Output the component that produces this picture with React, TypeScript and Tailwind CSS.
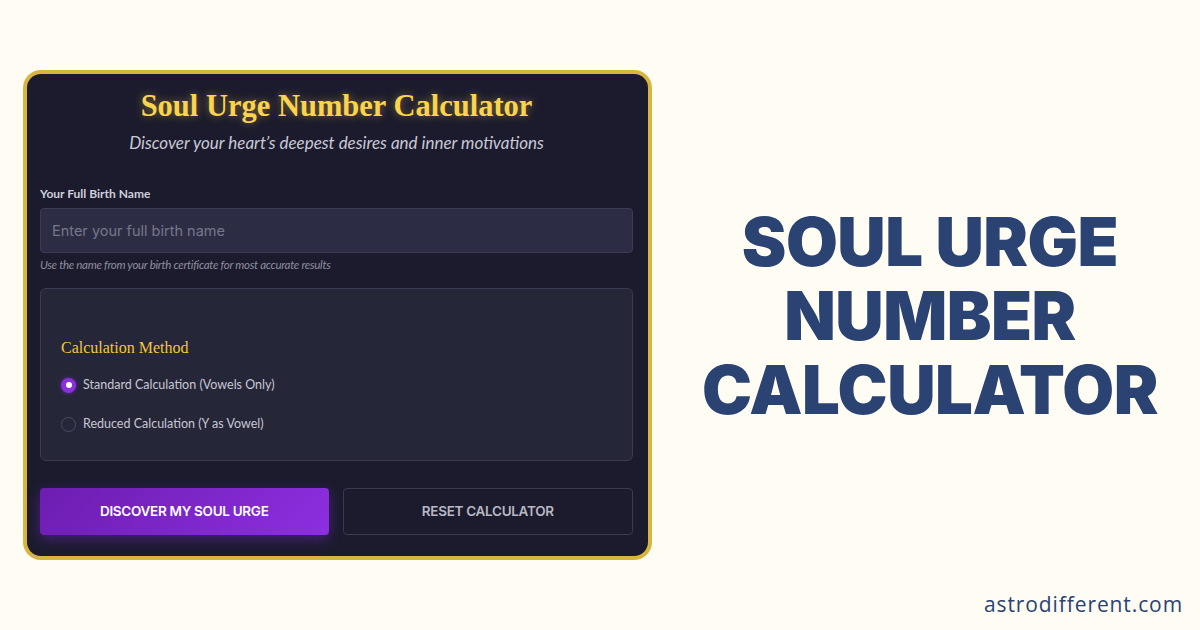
import React from "react";

export default function App() {
  return (
    <div className="w-[1200px] h-[630px] bg-[#fffcf4] relative flex overflow-hidden">
      <div className="pl-[23px] pt-[70px]">
        <div className="w-[629px] h-[490px] rounded-[18px] bg-[#d8b53e] p-[4px]">
          <div className="w-full h-full rounded-[14px] bg-[#1b1b2d] pl-[13px] pr-[15px] pt-[14px] flex flex-col">
            <h1
              className="text-center text-[30.5px] leading-[36px] font-bold text-[#fcd34d] [text-shadow:0_0_8px_rgba(252,211,77,0.45)]"
              style={{ fontFamily: '"Liberation Serif", "Times New Roman", serif' }}
            >
              Soul Urge Number Calculator
            </h1>
            <p
              className="text-center italic text-[17px] leading-[20px] mt-[9px] text-[#c9c9d6]"
              style={{ fontFamily: 'Lato, "Noto Sans", sans-serif' }}
            >
              Discover your heart’s deepest desires and inner motivations
            </p>
            <label
              className="block mt-[34px] text-[12px] font-bold text-[#cfcfda] leading-[14px]"
              style={{ fontFamily: 'Lato, "Noto Sans", sans-serif' }}
            >
              Your Full Birth Name
            </label>
            <div
              className="mt-[7px] h-[45px] rounded-[4px] bg-[#2c2c44] border border-[#3b3b56] flex items-center px-[11px] text-[14.5px] text-[#77778a]"
              style={{ fontFamily: 'Inter, "Noto Sans", sans-serif' }}
            >
              Enter your full birth name
            </div>
            <p
              className="mt-[5px] italic text-[11.5px] leading-[13px] text-[#8e8e9e] tracking-[-0.3px]"
              style={{ fontFamily: 'Lato, "Noto Sans", sans-serif' }}
            >
              Use the name from your birth certificate for most accurate results
            </p>
            <div className="mt-[17px] h-[173px] rounded-[6px] bg-[#262639] border border-[#3a3a54] px-[20px] pt-[49px]">
              <h2
                className="text-[16px] leading-[20px] text-[#f3c63a]"
                style={{ fontFamily: '"Liberation Serif", "Times New Roman", serif' }}
              >
                Calculation Method
              </h2>
              <div
                className="mt-[19px] flex flex-col gap-[23px] text-[12.5px] text-[#c6c6d2]"
                style={{ fontFamily: 'Lato, "Noto Sans", sans-serif' }}
              >
                <div className="flex items-center gap-[7px] h-[16px]">
                  <span className="w-[15px] h-[15px] rounded-full bg-[#8b2fe0] flex items-center justify-center shadow-[0_0_4px_rgba(139,47,224,0.6)]">
                    <span className="w-[6px] h-[6px] rounded-full bg-white" />
                  </span>
                  Standard Calculation (Vowels Only)
                </div>
                <div className="flex items-center gap-[7px] h-[16px]">
                  <span className="w-[15px] h-[15px] rounded-full border-[1.5px] border-[#4a4a66]" />
                  Reduced Calculation (Y as Vowel)
                </div>
              </div>
            </div>
            <div
              className="mt-[27px] flex gap-[14px] text-[13.5px] font-semibold uppercase tracking-[-0.3px]"
              style={{ fontFamily: 'Inter, "Noto Sans", sans-serif' }}
            >
              <div className="flex-1 h-[47px] rounded-[4px] bg-[linear-gradient(135deg,#6d1db0,#8c2fe0)] flex items-center justify-center text-white shadow-[0_4px_14px_rgba(124,40,210,0.45)]">
                DISCOVER MY SOUL URGE
              </div>
              <div className="flex-1 h-[47px] rounded-[4px] border border-[#3a3a52] bg-[#1b1b2d] flex items-center justify-center text-[#b8b8c4]">
                RESET CALCULATOR
              </div>
            </div>
          </div>
        </div>
      </div>
      <div className="flex-1 flex items-center justify-center pt-[2px]">
        <div
          className="text-center text-[#2a4373] font-black text-[67px] leading-[74px] tracking-[-0.5px] pl-[8px]"
          style={{ fontFamily: 'Inter, "Noto Sans", sans-serif' }}
        >
          SOUL URGE
          <br />
          NUMBER
          <br />
          CALCULATOR
        </div>
      </div>
      <div
        className="absolute right-[17px] bottom-[10px] text-[21px] text-[#2a4373] tracking-[0.9px]"
        style={{ fontFamily: '"Open Sans", sans-serif' }}
      >
        astrodifferent.com
      </div>
    </div>
  );
}
